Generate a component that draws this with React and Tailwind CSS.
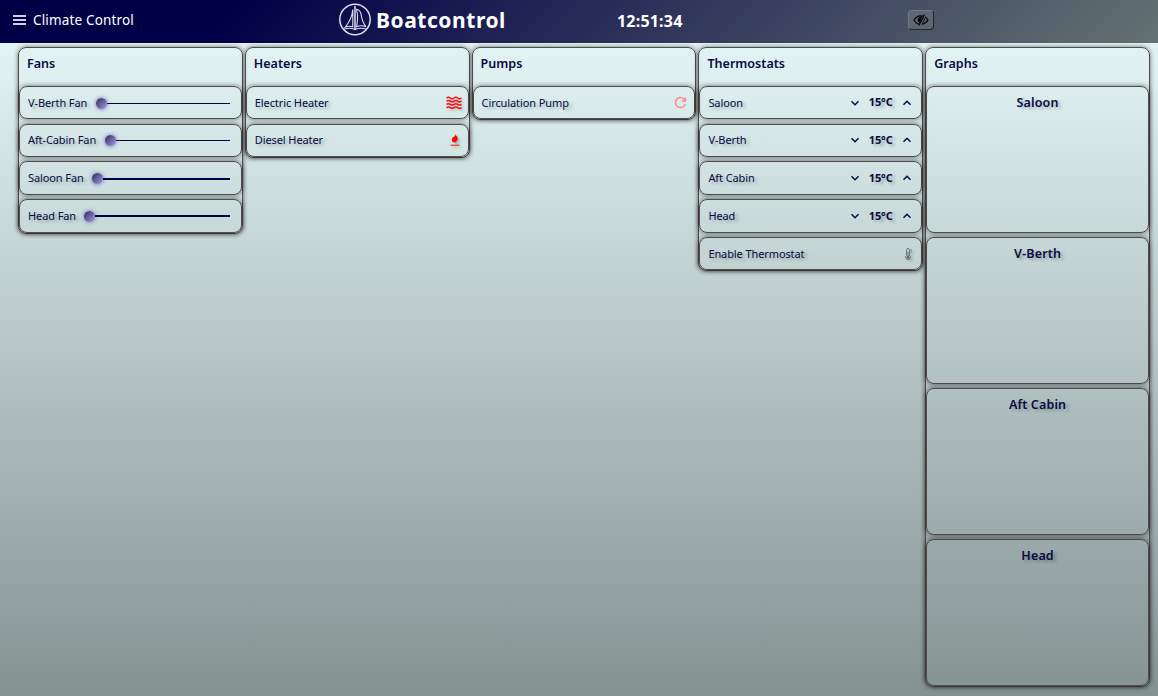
import React from "react";
import { MdRefresh } from "react-icons/md";

const shadowText = "[text-shadow:3px_2px_3px_rgba(40,60,70,0.3)]";
const box = "rounded-lg border border-[#524b4b] shadow-[0_0_5px_rgba(0,0,0,0.55)]";

function Column({ title, children }) {
  return (
    <section className={`flex min-w-0 flex-1 flex-col self-start ${box}`}>
      <h2 className="h-[37.9px] pl-[8px] pt-[6px] text-[12.5px] leading-[20px] font-semibold tracking-[0.03px]">{title}</h2>
      {children}
    </section>
  );
}

function Row({ label, w, children }) {
  return (
    <div className={`mb-[4.25px] flex h-[33.5px] items-center pr-[9px] pl-[8px] last:mb-0 ${box}`}>
      <span className={`shrink-0 whitespace-nowrap text-[11px] leading-[16px] tracking-[-0.1px] ${shadowText} ${w || ""}`}>{label}</span>
      {children}
    </div>
  );
}

function Slider({ thick }) {
  return (
    <div className="mt-[1px] mr-[2px] flex flex-1 items-center">
      <div className="size-[11px] shrink-0 rounded-full bg-linear-135/srgb from-[#2b2b55] to-[#a29ce8] shadow-[0_0_4px_#6a62c0]" />
      <div className={`flex-1 bg-[#000046] ${thick ? "h-[2px]" : "h-[1px]"}`} />
    </div>
  );
}

function Chevron({ up }) {
  return (
    <svg width="8" height="6" viewBox="0 0 8 6" fill="none" stroke="#0b0b48" strokeWidth="1.5">
      <path d={up ? "M0.5 4.8 4 1.3 7.5 4.8" : "M0.5 1.2 4 4.7 7.5 1.2"} />
    </svg>
  );
}

function Thermostat({ label }) {
  return (
    <Row label={label}>
      <div className="mr-[1px] ml-auto flex items-center">
        <Chevron />
        <span className={`w-[44px] pr-[1px] text-center text-[11px] font-bold tracking-[-0.1px] ${shadowText}`}>15°C</span>
        <Chevron up />
      </div>
    </Row>
  );
}

function Waves() {
  return (
    <svg className="-mr-[3px] ml-auto drop-shadow-[2px_2px_1px_rgba(0,0,0,0.15)]" width="16" height="14" viewBox="0 0 16 14" fill="none" stroke="#ff0808" strokeWidth="1.5">
      <path d="M.5 2q1.9-1.4 3.8 0t3.7 0t3.7 0t3.8 0M.5 5.2q1.9-1.4 3.8 0t3.7 0t3.7 0t3.8 0M.5 8.4q1.9-1.4 3.8 0t3.7 0t3.7 0t3.8 0M.5 11.6q1.9-1.4 3.8 0t3.7 0t3.7 0t3.8 0" />
    </svg>
  );
}

function Flame() {
  return (
    <svg className="-mr-[1px] ml-auto drop-shadow-[2px_2px_1px_rgba(0,0,0,0.2)]" width="10" height="12" viewBox="0 0 10 12" fill="#ff0505">
      <path d="M5.3 0.2C5.6 1.5 8 2.3 7.8 4.6C7.6 6.8 6 7.6 4.8 9.2C5 8.5 4.8 8 4.2 7.6C4 8.1 3.6 8.5 3.3 8.6C1.4 7.2 1.4 4.6 3 3.3C4.6 2.4 5.3 1.5 5.3 0.2Z" />
      <path d="M.5 10.7H9.5V11.7H.5Z" />
    </svg>
  );
}

function Thermometer() {
  return (
    <svg className="ml-auto drop-shadow-[2px_2px_1px_rgba(0,0,0,0.2)]" width="7" height="12" viewBox="0 0 7 12" fill="none" stroke="#555f60" strokeWidth="0.8">
      <path d="M1.6 7.2V1.8a1.4 1.4 0 0 1 2.8 0V7.2a2.4 2.4 0 1 1-2.8 0ZM3 4V8.5M5.4 2H7M5.4 4H6.7" />
      <circle cx="3" cy="9.2" r="1" fill="#555f60" />
    </svg>
  );
}

function HiddenEye() {
  return (
    <svg width="16" height="12" viewBox="0 0 16 12" fill="none" stroke="#050608" strokeWidth="1.2">
      <path d="M7.2 10.2C4.2 10.2 2.2 8.2 1 6C2.4 3.4 4.8 1.8 8 1.8C8.6 1.8 9.2 1.9 9.8 2M12 3.1C13.3 3.9 14.3 4.9 15 6C13.7 8.3 11.8 9.8 9 10.2" />
      <path d="M11.4 .6 5.8 11.4" strokeWidth="1.3" />
      <path d="M8.7 2.8A3.2 3.2 0 0 0 6.3 8.5Z" fill="#050608" strokeWidth="0.8" />
      <path d="M11.5 4.2Q11.8 7.2 9 8.6" strokeWidth="1" />
    </svg>
  );
}

function Logo() {
  return (
    <svg width="32" height="33" viewBox="0 0 32 33" fill="none" stroke="#dcdff0" strokeWidth="1.1">
      <circle cx="16" cy="16.5" r="15.2" strokeWidth="1.5" />
      <path d="M16 3V26.5" strokeWidth="1.5" />
      <path d="M13.8 6.5C13.3 13 10.5 19 6.3 24Q10 22.7 13.8 23.8ZM17.6 6.3Q20.8 6.5 22 11Q23.3 19.5 27 23.7Q22 21.8 17.6 23.8Q19.5 14.5 17.6 6.3Z" />
      <path d="M4.5 26.2Q10.5 24 16 26.6Q21.5 24 27.5 26.2" />
    </svg>
  );
}

function Graph({ label }) {
  return (
    <div className={`mb-[4px] flex h-[147px] justify-center pt-[7px] last:mb-0 ${box}`}>
      <h3 className={`text-[12.5px] leading-[18px] font-semibold tracking-[0.15px] ${shadowText}`}>{label}</h3>
    </div>
  );
}

export default function App() {
  return (
    <div className="flex h-[696px] w-[1158px] flex-col overflow-hidden bg-linear-to-b/srgb from-[#e8fbfa] to-[#849292] font-['Noto_Sans',sans-serif] text-[#0a0a44]">
      <header className="flex h-[43px] shrink-0 items-center bg-linear-135/srgb from-[#000046] from-20% to-[#647272] pb-[4px] text-white">
        <div className="flex w-[339px] items-center pl-[13px]">
          <div className="mt-[1px] flex w-[13px] flex-col gap-[2px]">
            <div className="h-[2px] bg-[#d0d0de]" />
            <div className="h-[2px] bg-[#d0d0de]" />
            <div className="h-[2px] bg-[#d0d0de]" />
          </div>
          <span className="ml-[7px] text-[13.5px] leading-[20px] tracking-[0.16px]">Climate Control</span>
        </div>
        <div className="flex w-[278px] items-center">
          <Logo />
          <span className="ml-[5px] text-[21px] leading-[28px] font-bold tracking-[0.55px]">Boatcontrol</span>
        </div>
        <span className="w-[291px] pt-[2px] text-[16px] leading-[20px] font-bold tracking-[0.2px]">12:51:34</span>
        <button className="flex h-[20px] w-[26px] items-center justify-center rounded-[4px] border border-t-[#747985] border-r-[#20242c] border-b-[#20242c] border-l-[#747985] bg-[#5d6673]">
          <HiddenEye />
        </button>
      </header>
      <main className="flex gap-[2px] pt-[4px] pr-[8px] pl-[18px]">
        <Column title="Fans">
          <Row label="V-Berth Fan" w="w-[68px]"><Slider /></Row>
          <Row label="Aft-Cabin Fan" w="w-[77px]"><Slider /></Row>
          <Row label="Saloon Fan" w="w-[64px]"><Slider thick /></Row>
          <Row label="Head Fan" w="w-[56px]"><Slider thick /></Row>
        </Column>
        <Column title="Heaters">
          <Row label="Electric Heater"><Waves /></Row>
          <Row label="Diesel Heater"><Flame /></Row>
        </Column>
        <Column title="Pumps">
          <Row label="Circulation Pump">
            <MdRefresh className="-mr-[4px] ml-auto text-[#ff8a85]" size={17} />
          </Row>
        </Column>
        <Column title="Thermostats">
          <Thermostat label="Saloon" />
          <Thermostat label="V-Berth" />
          <Thermostat label="Aft Cabin" />
          <Thermostat label="Head" />
          <Row label="Enable Thermostat"><Thermometer /></Row>
        </Column>
        <Column title="Graphs">
          <Graph label="Saloon" />
          <Graph label="V-Berth" />
          <Graph label="Aft Cabin" />
          <Graph label="Head" />
        </Column>
      </main>
    </div>
  );
}
